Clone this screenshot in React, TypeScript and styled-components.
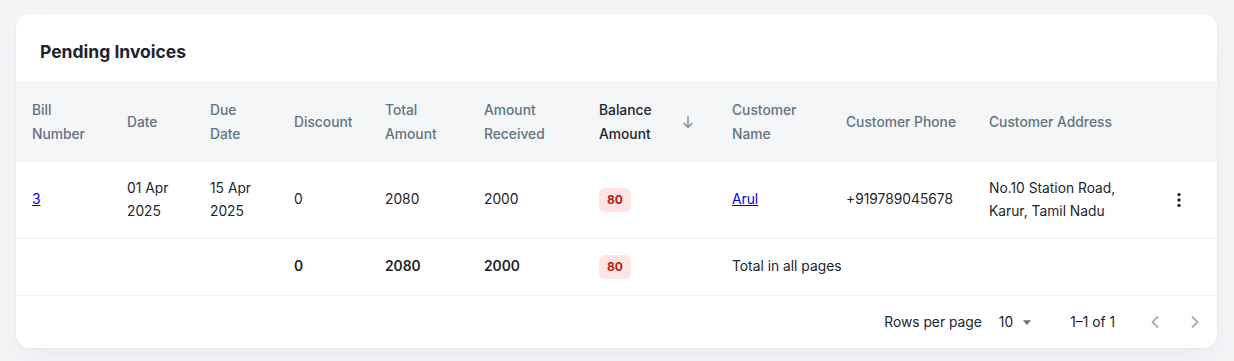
import React from 'react';
import styled, { createGlobalStyle } from 'styled-components';

const GlobalStyle = createGlobalStyle`
  body {
    margin: 0;
    background: #f4f5f7;
    font-family: "Inter", "Noto Sans", sans-serif;
    color: #1c252e;
  }
`;

const Page = styled.div`
  padding: 14px 17px 13px 16px;
`;

const Card = styled.div`
  background: #fff;
  border-radius: 14px;
  box-shadow: 0 0 2px rgba(145, 158, 171, 0.2), 0 12px 24px -4px rgba(145, 158, 171, 0.12);
  overflow: hidden;
`;

const Title = styled.h2`
  margin: 0;
  padding: 24px 24px 0 24px;
  height: 67px;
  box-sizing: border-box;
  font-size: 17.5px;
  font-weight: 700;
  line-height: 28px;
`;

const Table = styled.table`
  width: 100%;
  border-collapse: collapse;
  table-layout: fixed;
  font-size: 13.8px;
`;

const HeadRow = styled.tr`
  background: #f4f6f8;
  height: 81px;
`;

const Th = styled.th<{ $active?: boolean }>`
  text-align: left;
  padding: 0 16px;
  font-weight: 500;
  line-height: 24px;
  color: ${(p) => (p.$active ? '#1c252e' : '#637381')};
`;

const Row = styled.tr<{ $h: number }>`
  height: ${(p) => p.$h}px;
  border-bottom: 1px solid #f0f2f4;
`;

const Td = styled.td<{ $bold?: boolean }>`
  padding: 0 16px;
  line-height: 23px;
  font-weight: ${(p) => (p.$bold ? 600 : 400)};
  vertical-align: middle;
`;

const ActionTd = styled.td`
  padding: 0 12px;
`;

const Link = styled.a`
  color: #0000ee;
  text-decoration: underline;
`;

const SortLabel = styled.span`
  display: inline-flex;
  align-items: center;
  gap: 8px;
`;

const SortText = styled.span`
  width: 73px;
`;

const Badge = styled.span`
  display: inline-flex;
  align-items: center;
  justify-content: center;
  min-width: 32px;
  height: 24px;
  padding: 0 6px;
  box-sizing: border-box;
  border-radius: 6px;
  background: #ffe4e4;
  color: #b71d18;
  font-size: 12px;
  font-weight: 700;
`;

const IconButton = styled.button`
  width: 24px;
  height: 24px;
  display: flex;
  align-items: center;
  justify-content: center;
  border: none;
  background: none;
  padding: 0;
  color: #1c252e;
`;

const Footer = styled.div`
  height: 52px;
  display: flex;
  align-items: center;
  justify-content: flex-end;
  padding-right: 10px;
  font-size: 13.8px;
`;

const Select = styled.div`
  display: flex;
  align-items: center;
  gap: 7px;
  margin: 0 36px 0 17px;
`;

const PageNav = styled.div`
  display: flex;
  align-items: center;
  gap: 16px;
  margin-left: 28px;
`;

const NavButton = styled.button`
  width: 24px;
  height: 24px;
  display: flex;
  align-items: center;
  justify-content: center;
  border: none;
  background: none;
  padding: 0;
  color: #a6b0bb;
`;

const widths = [95, 83, 84, 91, 99, 115, 133, 114, 143, 182, 62];

const Chevron = ({ dir }: { dir: 'left' | 'right' }) => (
  <svg width="20" height="20" viewBox="0 0 24 24" fill="none" stroke="currentColor" strokeWidth="2.2" strokeLinecap="round" strokeLinejoin="round">
    {dir === 'left' ? <path d="M15 6l-6 6 6 6" /> : <path d="M9 6l6 6-6 6" />}
  </svg>
);

const App: React.FC = () => {
  return (
    <>
      <GlobalStyle />
      <Page>
        <Card>
          <Title>Pending Invoices</Title>
          <Table>
            <colgroup>
              {widths.map((w, i) => (
                <col key={i} style={{ width: w }} />
              ))}
            </colgroup>
            <thead>
              <HeadRow>
                <Th>Bill Number</Th>
                <Th>Date</Th>
                <Th>Due Date</Th>
                <Th>Discount</Th>
                <Th>Total Amount</Th>
                <Th>Amount Received</Th>
                <Th $active>
                  <SortLabel>
                    <SortText>Balance Amount</SortText>
                    <svg width="16" height="16" viewBox="0 0 24 24" fill="none" stroke="#8a97a5" strokeWidth="2.4" strokeLinecap="round" strokeLinejoin="round">
                      <path d="M12 4v16M6 14l6 6 6-6" />
                    </svg>
                  </SortLabel>
                </Th>
                <Th>Customer Name</Th>
                <Th>Customer Phone</Th>
                <Th>Customer Address</Th>
                <Th />
              </HeadRow>
            </thead>
            <tbody>
              <Row $h={76}>
                <Td><Link href="#">3</Link></Td>
                <Td>01 Apr 2025</Td>
                <Td>15 Apr 2025</Td>
                <Td>0</Td>
                <Td>2080</Td>
                <Td>2000</Td>
                <Td><Badge>80</Badge></Td>
                <Td><Link href="#">Arul</Link></Td>
                <Td>+919789045678</Td>
                <Td>No.10 Station Road, Karur, Tamil Nadu</Td>
                <ActionTd>
                  <IconButton>
                    <svg width="20" height="20" viewBox="0 0 24 24" fill="currentColor">
                      <circle cx="12" cy="5.5" r="2" />
                      <circle cx="12" cy="12" r="2" />
                      <circle cx="12" cy="18.5" r="2" />
                    </svg>
                  </IconButton>
                </ActionTd>
              </Row>
              <Row $h={57}>
                <Td />
                <Td />
                <Td />
                <Td $bold>0</Td>
                <Td $bold>2080</Td>
                <Td $bold>2000</Td>
                <Td><Badge>80</Badge></Td>
                <Td colSpan={2}>Total in all pages</Td>
                <Td />
                <Td />
              </Row>
            </tbody>
          </Table>
          <Footer>
            <span>Rows per page</span>
            <Select>
              <span>10</span>
              <svg width="14" height="14" viewBox="0 0 24 24" fill="#637381">
                <path d="M5 9h14l-7 8z" />
              </svg>
            </Select>
            <span>1–1 of 1</span>
            <PageNav>
              <NavButton><Chevron dir="left" /></NavButton>
              <NavButton><Chevron dir="right" /></NavButton>
            </PageNav>
          </Footer>
        </Card>
      </Page>
    </>
  );
};

export default App;
